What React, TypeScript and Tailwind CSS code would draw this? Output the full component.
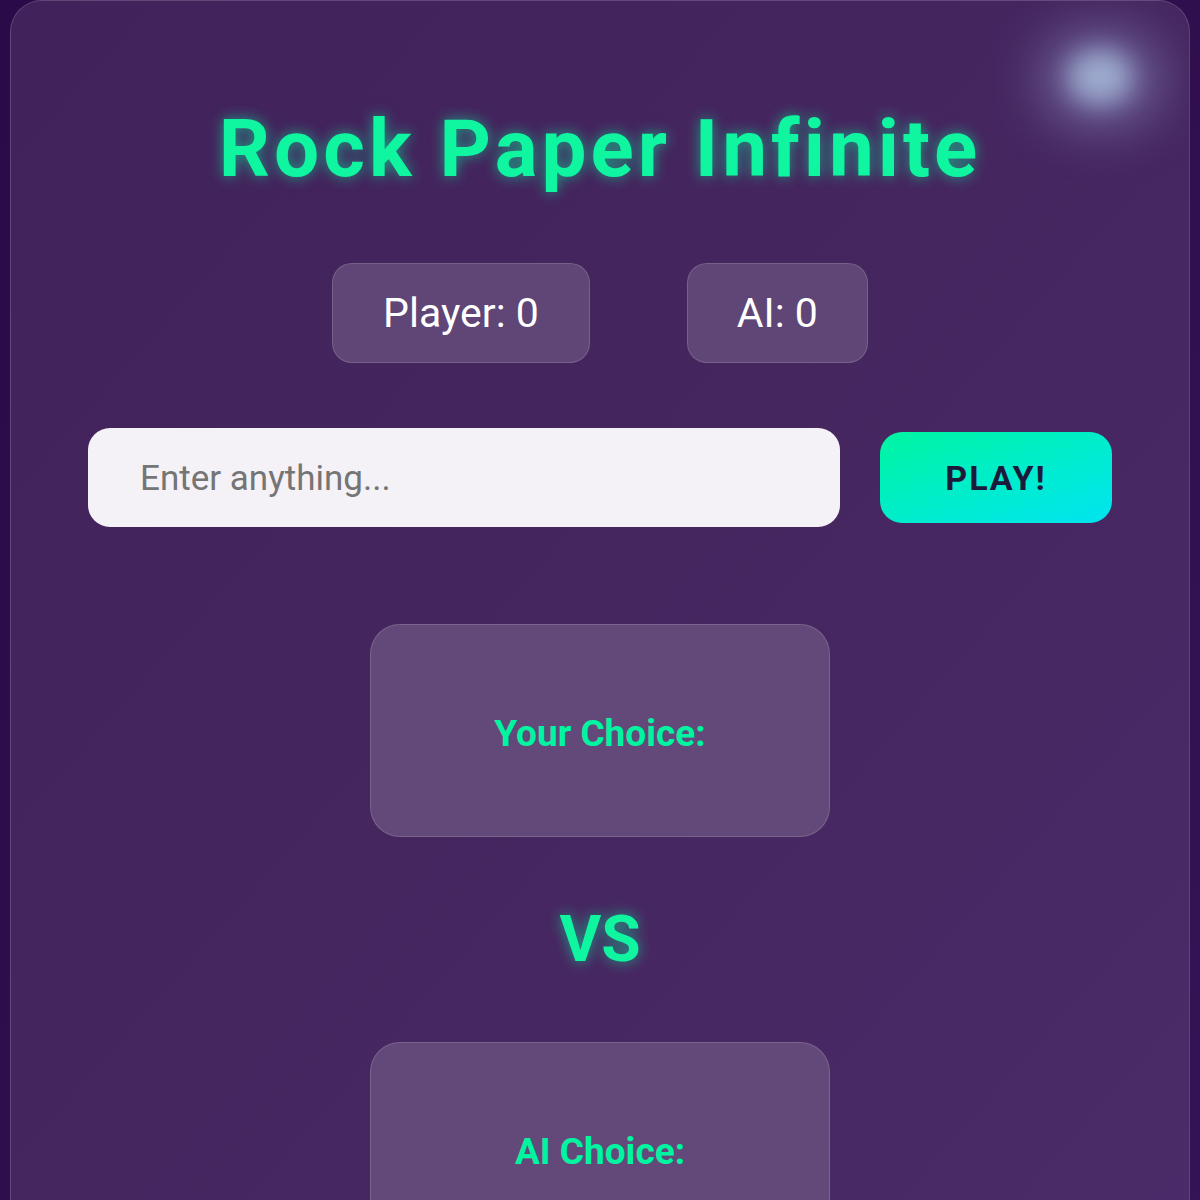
import { useState } from "react";

export default function App() {
  const [entrada, setEntrada] = useState<string>("");
  const [pontos] = useState({ player: 0, ai: 0 });

  function renderizarEscolha(titulo: string) {
    return (
      <div className="w-[460px] h-[213px] pt-[6px] rounded-[30px] border border-white/15 bg-[#624979] flex items-center justify-center">
        <span className="text-[37px] font-bold text-[#00f5a0]">{titulo}</span>
      </div>
    );
  }

  return (
    <div
      className="min-h-screen px-[10px] bg-gradient-to-br from-[#2a0a48] to-[#361356]"
      style={{ fontFamily: "Roboto, 'Liberation Sans', sans-serif" }}
    >
      <div className="relative overflow-hidden rounded-t-[32px] border border-white/15 bg-gradient-to-br from-[#41225b] via-[#46265f] to-[#4b2b69] pt-[108px] pb-20 flex flex-col items-center">
        <div className="absolute left-[1030px] top-[30px] w-[120px] h-[95px] rounded-full bg-[#9aa6d4] opacity-50 blur-[26px]" />
        <div className="absolute left-[1058px] top-[50px] w-[62px] h-[52px] rounded-full bg-[#a8bcdc] opacity-80 blur-[12px]" />

        <h1 className="text-[80px] leading-none font-bold tracking-[4px] text-[#0ff5a0] [text-shadow:0_0_14px_rgba(0,245,160,0.6)]">
          Rock Paper Infinite
        </h1>

        <div className="flex gap-[97px] mt-[74px]">
          <div className="h-[100px] px-[50px] pt-[2px] rounded-[20px] border border-white/15 bg-[#5f4676] flex items-center text-[41px] text-white">
            Player: {pontos.player}
          </div>
          <div className="h-[100px] px-[49px] pt-[2px] rounded-[20px] border border-white/15 bg-[#5f4676] flex items-center text-[41px] text-white">
            AI: {pontos.ai}
          </div>
        </div>

        <div className="flex items-center gap-10 mt-[65px] w-[1024px]">
          <input
            className="w-[752px] h-[99px] pt-[2px] rounded-[22px] bg-[#f4f1f7] pl-[52px] text-[35px] text-[#333] placeholder:text-[#757575] outline-none"
            placeholder="Enter anything..."
            value={entrada}
            onChange={(e) => setEntrada(e.target.value)}
          />
          <button className="w-[232px] h-[91px] pt-[2px] rounded-[22px] bg-gradient-to-br from-[#00f5a0] to-[#00e4f0] text-[34px] font-bold tracking-[2px] text-[#1b1a3a]">
            PLAY!
          </button>
        </div>

        <div className="mt-[97px]">{renderizarEscolha("Your Choice:")}</div>

        <div className="mt-[71px] mb-[70px] text-[64px] leading-none font-bold text-[#0ff5a0] [text-shadow:0_0_14px_rgba(0,245,160,0.6)]">
          VS
        </div>

        {renderizarEscolha("AI Choice:")}
      </div>
    </div>
  );
}
